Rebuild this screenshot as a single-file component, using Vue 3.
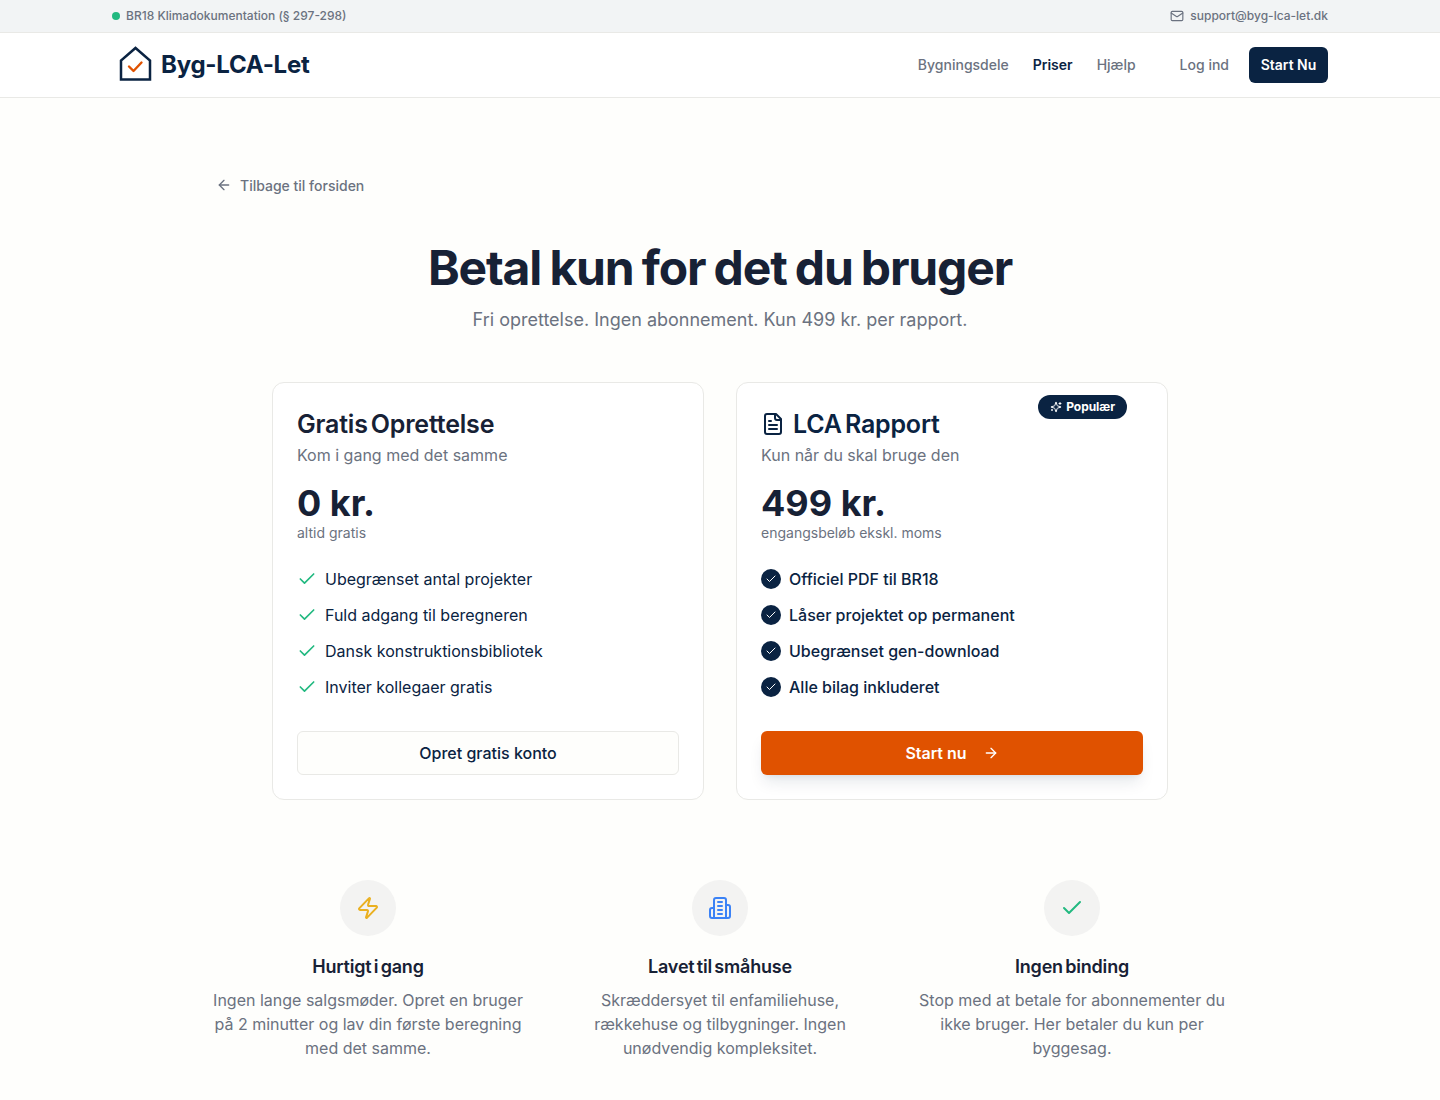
<template>
  <div class="page">
    <div class="topbar">
      <div class="topbar-in">
        <div class="top-left"><span class="dot"></span>BR18 Klimadokumentation (§ 297-298)</div>
        <div class="top-right">
          <svg width="14" height="14" viewBox="0 0 24 24" fill="none" stroke="currentColor" stroke-width="2" stroke-linecap="round" stroke-linejoin="round"><path d="m22 7-8.991 5.727a2 2 0 0 1-2.009 0L2 7" /><rect x="2" y="4" width="20" height="16" rx="2" /></svg>
          support@byg-lca-let.dk
        </div>
      </div>
    </div>

    <header class="header">
      <div class="header-in">
        <div class="logo">
          <svg width="33" height="36" viewBox="0 0 33 36" fill="none" stroke-linejoin="miter">
            <path d="M2 33.500V14.500L16.500 2 31 14.500v19z" stroke="#0a2342" stroke-width="2.500" />
            <path d="M10 20.500l4.500 4.500 8-8.500" stroke="#e05200" stroke-width="2.400" stroke-linecap="round" stroke-linejoin="round" />
          </svg>
          <span class="logo-text">Byg-LCA-Let</span>
        </div>
        <nav class="nav">
          <a>Bygningsdele</a>
          <a class="active">Priser</a>
          <a>Hjælp</a>
        </nav>
        <a class="login">Log ind</a>
        <button class="start-btn">Start Nu</button>
      </div>
    </header>

    <main class="main">
      <a class="back">
        <svg width="16" height="16" viewBox="0 0 24 24" fill="none" stroke="currentColor" stroke-width="2" stroke-linecap="round" stroke-linejoin="round"><path d="m12 19-7-7 7-7" /><path d="M19 12H5" /></svg>
        Tilbage til forsiden
      </a>

      <div class="hero">
        <h1>Betal kun for det du bruger</h1>
        <p>Fri oprettelse. Ingen abonnement. Kun 499 kr. per rapport.</p>
      </div>

      <div class="cards">
        <section class="card">
          <h2 class="dark">Gratis Oprettelse</h2>
          <p class="sub">Kom i gang med det samme</p>
          <div class="price">0 kr.</div>
          <p class="note">altid gratis</p>
          <ul class="list">
            <li v-for="item in freeItems" :key="item">
              <svg class="check" width="20" height="20" viewBox="0 0 24 24" fill="none" stroke="#22b980" stroke-width="2" stroke-linecap="round" stroke-linejoin="round"><path d="M20 6 9 17l-5-5" /></svg>
              {{ item }}
            </li>
          </ul>
          <button class="outline-btn">Opret gratis konto</button>
        </section>

        <section class="card">
          <span class="badge">
            <svg width="12" height="12" viewBox="0 0 24 24" fill="none" stroke="currentColor" stroke-width="2" stroke-linecap="round" stroke-linejoin="round"><path d="M9.937 15.500A2 2 0 0 0 8.500 14.063l-6.135-1.582a.5.500 0 0 1 0-.962L8.500 9.936A2 2 0 0 0 9.937 8.500l1.582-6.135a.5.500 0 0 1 .963 0L14.063 8.500A2 2 0 0 0 15.500 9.937l6.135 1.581a.5.500 0 0 1 0 .964L15.500 14.063a2 2 0 0 0-1.437 1.437l-1.582 6.135a.5.500 0 0 1-.963 0z" /><path d="M20 3v4" /><path d="M22 5h-4" /><path d="M4 17v2" /><path d="M5 18H3" /></svg>
            <span class="badge-text">Populær</span>
          </span>
          <h2 class="with-icon">
            <svg width="24" height="24" viewBox="0 0 24 24" fill="none" stroke="#0a2342" stroke-width="2" stroke-linecap="round" stroke-linejoin="round"><path d="M15 2H6a2 2 0 0 0-2 2v16a2 2 0 0 0 2 2h12a2 2 0 0 0 2-2V7Z" /><path d="M14 2v4a2 2 0 0 0 2 2h4" /><path d="M10 9H8" /><path d="M16 13H8" /><path d="M16 17H8" /></svg>
            LCA Rapport
          </h2>
          <p class="sub">Kun når du skal bruge den</p>
          <div class="price">499 kr.</div>
          <p class="note">engangsbeløb ekskl. moms</p>
          <ul class="list paid">
            <li v-for="item in paidItems" :key="item">
              <span class="round-check">
                <svg width="12" height="12" viewBox="0 0 24 24" fill="none" stroke="#fff" stroke-width="2" stroke-linecap="round" stroke-linejoin="round"><path d="M20 6 9 17l-5-5" /></svg>
              </span>
              {{ item }}
            </li>
          </ul>
          <button class="orange-btn">
            Start nu
            <svg width="16" height="16" viewBox="0 0 24 24" fill="none" stroke="currentColor" stroke-width="2" stroke-linecap="round" stroke-linejoin="round"><path d="M5 12h14" /><path d="m12 5 7 7-7 7" /></svg>
          </button>
        </section>
      </div>

      <div class="features">
        <div class="feature">
          <div class="circle">
            <svg width="24" height="24" viewBox="0 0 24 24" fill="none" stroke="#eab020" stroke-width="2" stroke-linecap="round" stroke-linejoin="round"><path d="M4 14a1 1 0 0 1-.78-1.630l9.900-10.200a.5.500 0 0 1 .860.460l-1.920 6.020A1 1 0 0 0 13 10h7a1 1 0 0 1 .78 1.630l-9.900 10.200a.5.500 0 0 1-.860-.460l1.920-6.020A1 1 0 0 0 11 14z" /></svg>
          </div>
          <h3>Hurtigt i gang</h3>
          <p>Ingen lange salgsmøder. Opret en bruger på 2 minutter og lav din første beregning med det samme.</p>
        </div>
        <div class="feature">
          <div class="circle">
            <svg width="24" height="24" viewBox="0 0 24 24" fill="none" stroke="#3b82f6" stroke-width="2" stroke-linecap="round" stroke-linejoin="round"><path d="M6 22V4a2 2 0 0 1 2-2h8a2 2 0 0 1 2 2v18Z" /><path d="M6 12H4a2 2 0 0 0-2 2v6a2 2 0 0 0 2 2h2" /><path d="M18 9h2a2 2 0 0 1 2 2v9a2 2 0 0 1-2 2h-2" /><path d="M10 6h4" /><path d="M10 10h4" /><path d="M10 14h4" /><path d="M10 18h4" /></svg>
          </div>
          <h3>Lavet til småhuse</h3>
          <p>Skræddersyet til enfamiliehuse, rækkehuse og tilbygninger. Ingen unødvendig kompleksitet.</p>
        </div>
        <div class="feature">
          <div class="circle">
            <svg width="24" height="24" viewBox="0 0 24 24" fill="none" stroke="#22b980" stroke-width="2" stroke-linecap="round" stroke-linejoin="round"><path d="M20 6 9 17l-5-5" /></svg>
          </div>
          <h3>Ingen binding</h3>
          <p>Stop med at betale for abonnementer du ikke bruger. Her betaler du kun per byggesag.</p>
        </div>
      </div>
    </main>
  </div>
</template>

<script setup>
const freeItems = [
  'Ubegrænset antal projekter',
  'Fuld adgang til beregneren',
  'Dansk konstruktionsbibliotek',
  'Inviter kollegaer gratis',
]

const paidItems = [
  'Officiel PDF til BR18',
  'Låser projektet op permanent',
  'Ubegrænset gen-download',
  'Alle bilag inkluderet',
]
</script>

<style>
body {
  background: #fefefc;
}
</style>

<style scoped>
.page {
  font-family: Inter, "Liberation Sans", sans-serif;
  color: #0a2342;
  min-height: 1100px;
  background: #fefefc;
}

.topbar {
  background: #f2f4f5;
  border-bottom: 1px solid #e9e9e6;
  color: #6b7280;
  font-size: 12px;
  font-weight: 500;
}

.topbar-in {
  max-width: 1216px;
  margin: 0 auto;
  height: 32px;
  padding-bottom: 2px;
  box-sizing: border-box;
  display: flex;
  align-items: center;
  justify-content: space-between;
}

.top-left,
.top-right {
  display: flex;
  align-items: center;
}

.dot {
  width: 8px;
  height: 8px;
  border-radius: 50%;
  background: #22b980;
  margin: 2px 6px 0 0;
}

.top-right svg {
  margin: 2px 6px 0 0;
}

.header {
  background: #fff;
  border-bottom: 1px solid #e9e9e6;
}

.header-in {
  max-width: 1216px;
  margin: 0 auto;
  height: 64px;
  padding-bottom: 2px;
  box-sizing: border-box;
  display: flex;
  align-items: center;
}

.logo {
  display: flex;
  align-items: center;
  gap: 9px;
  margin-left: 7px;
}

.logo-text {
  font-size: 24px;
  font-weight: 700;
  letter-spacing: -0.25px;
}

.nav {
  margin-left: auto;
  display: flex;
  gap: 24px;
  font-size: 14px;
  font-weight: 500;
  color: #6b7280;
}

.nav .active {
  color: #0a2342;
  font-weight: 600;
}

.login {
  margin-left: 44px;
  font-size: 14px;
  font-weight: 500;
  color: #6b7280;
}

.start-btn {
  margin: 2px 0 0 20px;
  height: 36px;
  width: 79px;
  border: 0;
  border-radius: 6px;
  background: #0a2342;
  color: #fff;
  font: 600 14px Inter, sans-serif;
  padding-bottom: 2px;
}

.main {
  width: 1024px;
  margin: 0 auto;
  padding-top: 71px;
}

.back {
  display: inline-flex;
  align-items: center;
  gap: 8px;
  margin-left: 8px;
  height: 32px;
  font-size: 14px;
  font-weight: 500;
  color: #6b7280;
}

.hero {
  text-align: center;
  margin-top: 37px;
}

h1 {
  margin: 0;
  font-size: 48px;
  line-height: 60px;
  font-weight: 700;
  letter-spacing: -1.15px;
  word-spacing: -2px;
  color: #172135;
}

.hero p {
  margin: 8px 0 0;
  font-size: 18px;
  line-height: 28px;
  color: #6b7280;
}

.cards {
  width: 896px;
  margin: 48px auto 0;
  display: grid;
  grid-template-columns: 1fr 1fr;
  gap: 32px;
}

.card {
  position: relative;
  background: #fff;
  border: 1px solid #e9e9e6;
  border-radius: 12px;
  padding: 24px;
  display: flex;
  flex-direction: column;
}

h2 {
  margin: 1px 0 0;
  font-size: 25px;
  line-height: 32px;
  font-weight: 600;
  letter-spacing: -0.2px;
  word-spacing: -3px;
}

.dark {
  color: #172135;
}

.with-icon {
  display: flex;
  align-items: center;
  gap: 8px;
}

.sub {
  margin: 3px 0 0;
  font-size: 16px;
  line-height: 24px;
  color: #6b7280;
}

.price {
  margin-top: 16px;
  font-size: 36px;
  line-height: 40px;
  font-weight: 700;
  color: #172135;
}

.note {
  margin: 0;
  font-size: 14px;
  line-height: 20px;
  color: #6b7280;
}

.list {
  list-style: none;
  margin: 24px 0 0;
  padding: 0;
  display: flex;
  flex-direction: column;
  gap: 12px;
}

.list li {
  display: flex;
  align-items: center;
  gap: 8px;
  height: 24px;
  font-size: 16px;
}

.paid li {
  font-weight: 500;
}

.check {
  flex: none;
}

.round-check {
  width: 20px;
  height: 20px;
  border-radius: 50%;
  background: #0a2342;
  display: flex;
  align-items: center;
  justify-content: center;
  flex: none;
}

.outline-btn,
.orange-btn {
  margin-top: 32px;
  height: 44px;
  border-radius: 6px;
  font: 500 16px Inter, sans-serif;
}

.outline-btn {
  background: #fefefc;
  border: 1px solid #e9e9e6;
  color: #0a2342;
}

.orange-btn {
  border: 0;
  background: #e05200;
  color: #fff;
  font-weight: 600;
  display: flex;
  align-items: center;
  justify-content: center;
  gap: 16px;
  box-shadow: 0 10px 15px -3px rgba(10, 35, 66, 0.1), 0 4px 6px -4px rgba(10, 35, 66, 0.1);
}

.badge {
  position: absolute;
  top: 12px;
  right: 40px;
  height: 24px;
  padding: 0 12px;
  border-radius: 12px;
  background: #0a2342;
  color: #fff;
  font-size: 12px;
  font-weight: 700;
  letter-spacing: -0.05px;
  display: flex;
  align-items: center;
  gap: 4px;
}

.badge-text {
  margin-bottom: 2px;
}

.features {
  margin-top: 80px;
  display: grid;
  grid-template-columns: repeat(3, 1fr);
  gap: 32px;
}

.feature {
  text-align: center;
}

.circle {
  width: 56px;
  height: 56px;
  margin: 0 auto;
  border-radius: 50%;
  background: #f3f3f2;
  display: flex;
  align-items: center;
  justify-content: center;
}

h3 {
  margin: 17px 0 0;
  font-size: 18px;
  line-height: 28px;
  font-weight: 600;
  letter-spacing: -0.2px;
  word-spacing: -2px;
  color: #172135;
}

.feature p {
  margin: 7px 0 0;
  font-size: 16px;
  line-height: 24px;
  color: #6b7280;
}
</style>
